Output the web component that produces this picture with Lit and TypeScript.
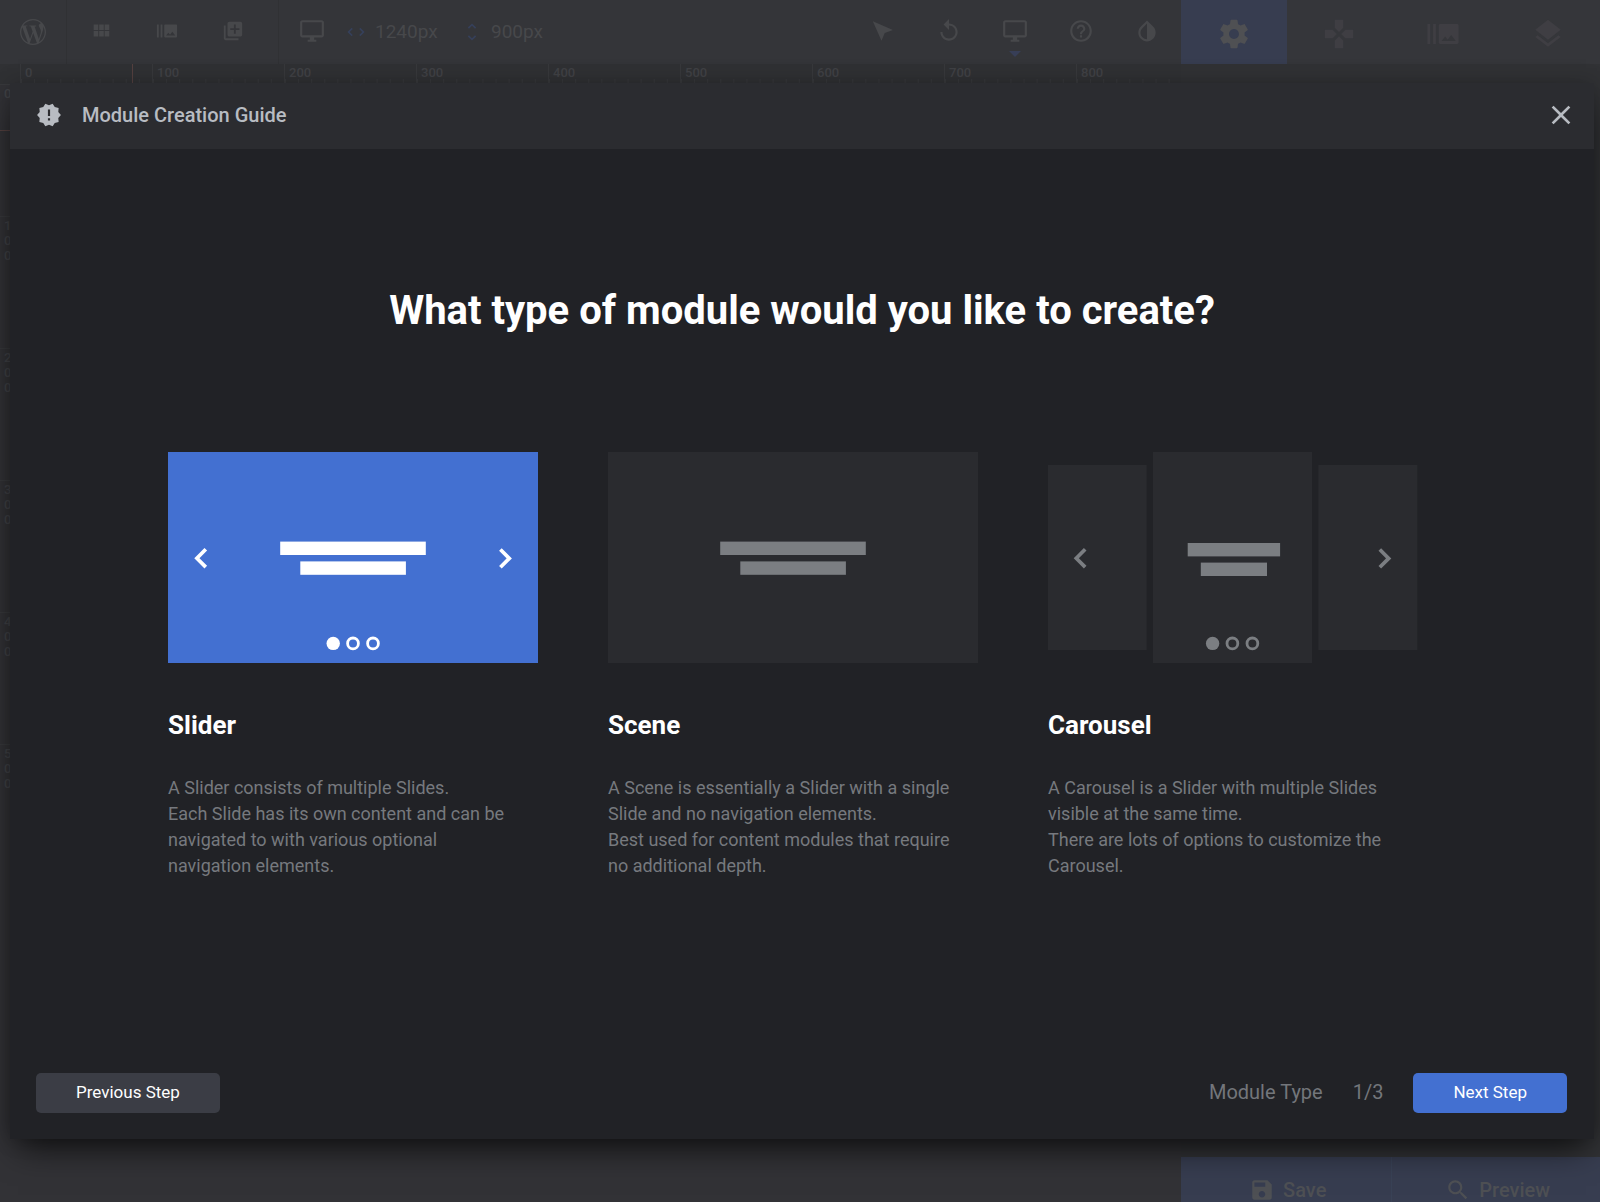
import { LitElement, html, css, svg } from "lit";
import { customElement, property, state } from "lit/decorators.js";
import { classMap } from "lit/directives/class-map.js";

const ICONS: Record<string, string> = {
  wordpress:
    "M21.469 6.825c.84 1.537 1.318 3.3 1.318 5.175 0 3.979-2.156 7.456-5.363 9.325l3.295-9.527c.615-1.54.82-2.771.82-3.864 0-.405-.026-.78-.07-1.11m-7.981.105c.647-.03 1.232-.105 1.232-.105.582-.075.514-.93-.067-.899 0 0-1.755.135-2.88.135-1.064 0-2.85-.15-2.85-.15-.585-.03-.661.855-.075.885 0 0 .54.061 1.125.09l1.68 4.605-2.37 7.08L5.354 6.9c.649-.03 1.234-.1 1.234-.1.585-.075.516-.93-.065-.896 0 0-1.746.138-2.874.138-.2 0-.438-.008-.69-.015C4.911 3.15 8.235 1.215 12 1.215c2.809 0 5.365 1.072 7.286 2.833-.046-.003-.091-.009-.141-.009-1.06 0-1.812.923-1.812 1.914 0 .89.513 1.643 1.06 2.531.411.72.89 1.643.89 2.977 0 .915-.354 1.994-.821 3.479l-1.075 3.585-3.9-11.61.001.014zM12 22.784c-1.059 0-2.081-.153-3.048-.437l3.237-9.406 3.315 9.087c.024.053.05.101.078.149-1.12.393-2.325.609-3.582.609M1.211 12c0-1.564.336-3.05.935-4.39L7.29 21.709C3.694 19.96 1.212 16.271 1.211 12M12 0C5.385 0 0 5.385 0 12s5.385 12 12 12 12-5.385 12-12S18.615 0 12 0",
  modules:
    "M4 11h5V5H4v6zm0 7h5v-6H4v6zm6 0h5v-6h-5v6zm6 0h5v-6h-5v6zm-6-7h5V5h-5v6zm6-6v6h5V5h-5z",
  slides:
    "M1 5h2v14H1zm4 0h2v14H5zm17 0H10c-.55 0-1 .45-1 1v12c0 .55.45 1 1 1h12c.55 0 1-.45 1-1V6c0-.55-.45-1-1-1zM11 17l2.5-3.15L15.29 16l2.5-3.22L21 17H11z",
  add: "M4 6H2v14c0 1.1.9 2 2 2h14v-2H4V6zm16-4H8c-1.1 0-2 .9-2 2v12c0 1.1.9 2 2 2h12c1.1 0 2-.9 2-2V4c0-1.1-.9-2-2-2zm-1 9h-4v4h-2v-4H9V9h4V5h2v4h4v2z",
  desktop:
    "M21 2H3c-1.1 0-2 .9-2 2v12c0 1.1.9 2 2 2h7v2H8v2h8v-2h-2v-2h7c1.1 0 2-.9 2-2V4c0-1.1-.9-2-2-2zm0 14H3V4h18v12z",
  width:
    "M7.2 16.6L2.6 12l4.6-4.6 1.3 1.3L5.2 12l3.3 3.3zM16.8 16.6l4.6-4.6-4.6-4.6-1.3 1.3 3.3 3.3-3.3 3.3z",
  height:
    "M7.4 7.2L12 2.6l4.6 4.6-1.3 1.3L12 5.2 8.7 8.5zM7.4 16.8l4.6 4.6 4.6-4.6-1.3-1.3-3.3 3.3-3.3-3.3z",
  pointer: "M2.6 3.1L21.2 11.1 13.6 13.9 10.6 21z",
  undo: "M12 5V1L7 6l5 5V7c3.31 0 6 2.69 6 6s-2.69 6-6 6-6-2.69-6-6H4c0 4.42 3.58 8 8 8s8-3.58 8-8-3.58-8-8-8z",
  help: "M11 18h2v-2h-2v2zm1-16C6.48 2 2 6.48 2 12s4.48 10 10 10 10-4.48 10-10S17.52 2 12 2zm0 18c-4.41 0-8-3.59-8-8s3.59-8 8-8 8 3.59 8 8-3.59 8-8 8zm0-14c-2.21 0-4 1.79-4 4h2c0-1.1.9-2 2-2s2 .9 2 2c0 2-3 1.75-3 5h2c0-2.25 3-2.5 3-5 0-2.21-1.79-4-4-4z",
  contrast:
    "M17.66 7.93L12 2.27 6.34 7.93c-3.12 3.12-3.12 8.19 0 11.31C7.9 20.8 9.95 21.58 12 21.58c2.05 0 4.1-.78 5.66-2.34 3.12-3.12 3.12-8.19 0-11.31zM12 19.59c-1.6 0-3.11-.62-4.24-1.76C6.62 16.69 6 15.19 6 13.59s.62-3.11 1.76-4.24L12 5.1v14.49z",
  settings:
    "M19.43 12.98c.04-.32.07-.64.07-.98s-.03-.66-.07-.98l2.11-1.65c.19-.15.24-.42.12-.64l-2-3.46c-.12-.22-.39-.3-.61-.22l-2.49 1c-.52-.4-1.08-.73-1.69-.98l-.38-2.65C14.46 2.18 14.25 2 14 2h-4c-.25 0-.46.18-.49.42l-.38 2.65c-.61.25-1.17.59-1.69.98l-2.49-1c-.23-.09-.49 0-.61.22l-2 3.46c-.13.22-.07.49.12.64l2.11 1.65c-.04.32-.07.65-.07.98s.03.66.07.98l-2.11 1.65c-.19.15-.24.42-.12.64l2 3.46c.12.22.39.3.61.22l2.49-1c.52.4 1.08.73 1.69.98l.38 2.65c.03.24.24.42.49.42h4c.25 0 .46-.18.49-.42l.38-2.65c.61-.25 1.17-.59 1.69-.98l2.49 1c.23.09.49 0 .61-.22l2-3.46c.12-.22.07-.49-.12-.64l-2.11-1.65zM12 15.5c-1.93 0-3.5-1.57-3.5-3.5s1.57-3.5 3.5-3.5 3.5 1.57 3.5 3.5-1.57 3.5-3.5 3.5z",
  navigation:
    "M15 7.5V2H9v5.5l3 3 3-3zM7.5 9H2v6h5.5l3-3-3-3zM9 16.5V22h6v-5.5l-3-3-3 3zM16.5 9l-3 3 3 3H22V9h-5.5z",
  layers:
    "M11.99 18.54l-7.37-5.73L3 14.07l9 7 9-7-1.63-1.27-7.38 5.74zM12 16l7.36-5.73L21 9l-9-7-9 7 1.63 1.27L12 16z",
  guide:
    "M23 12l-2.44-2.78.34-3.68-3.61-.82-1.89-3.18L12 3 8.6 1.54 6.71 4.72l-3.61.81.34 3.68L1 12l2.44 2.78-.34 3.69 3.61.82 1.89 3.18L12 21l3.4 1.46 1.89-3.18 3.61-.82-.34-3.68L23 12zm-10 5h-2v-2h2v2zm0-4h-2V7h2v6z",
  close:
    "M19 6.41L17.59 5 12 10.59 6.41 5 5 6.41 10.59 12 5 17.59 6.41 19 12 13.41 17.59 19 19 17.59 13.41 12z",
  save: "M17 3H5c-1.11 0-2 .9-2 2v14c0 1.1.89 2 2 2h14c1.1 0 2-.9 2-2V7l-4-4zm-5 16c-1.66 0-3-1.34-3-3s1.34-3 3-3 3 1.34 3 3-1.34 3-3 3zm3-10H5V5h10v4z",
  search:
    "M15.5 14h-.79l-.28-.27C15.41 12.59 16 11.11 16 9.5 16 5.91 13.09 3 9.5 3S3 5.91 3 9.5 5.91 16 9.5 16c1.61 0 3.09-.59 4.23-1.57l.27.28v.79l5 4.99L20.49 19l-4.99-5zm-6 0C7.01 14 5 11.99 5 9.5S7.01 5 9.5 5 14 7.01 14 9.5 11.99 14 9.5 14z",
};

const icon = (name: string, size: "small" | "medium" | "large" | "close" = "medium") => html`
  <svg class="icon ${size}" viewBox="0 0 24 24" aria-hidden="true"><path d=${ICONS[name]}></path></svg>
`;

const reset = css`
  * {
    box-sizing: border-box;
  }
  button {
    margin: 0;
    padding: 0;
    border: 0;
    background: none;
    color: inherit;
    font: inherit;
    cursor: pointer;
  }
  .icon {
    display: block;
    flex: none;
    width: 26px;
    height: 26px;
    fill: currentColor;
  }
  .icon.small {
    width: 22px;
    height: 22px;
  }
  .icon.large {
    width: 34px;
    height: 34px;
  }
  .icon.close {
    width: 32px;
    height: 32px;
  }
`;

/* ---------- Editor toolbar ---------- */

@customElement("editor-toolbar")
class EditorToolbar extends LitElement {
  static styles = [
    reset,
    css`
      :host {
        display: flex;
        height: 64px;
        background: #343539;
        color: #47484b;
      }
      .group {
        display: flex;
        align-items: stretch;
        padding: 0 12px 0 1px;
        border-right: 1px solid #303134;
      }
      .group.brand {
        padding: 0;
      }
      .tool {
        display: flex;
        align-items: center;
        justify-content: center;
        position: relative;
        width: 66px;
        height: 62px;
      }
      .brand .tool {
        height: 64px;
      }
      .tool.active::after {
        content: "";
        position: absolute;
        left: 27px;
        top: 51px;
        border: 6px solid transparent;
        border-top-color: #373e57;
        border-bottom: 0;
      }
      .size {
        display: flex;
        align-items: center;
        height: 64px;
      }
      .size .icon {
        color: #36405a;
      }
      .size input {
        width: 86px;
        margin-left: 8px;
        padding: 0;
        border: 0;
        background: none;
        color: inherit;
        font: 19px/24px Roboto, sans-serif;
      }
      .spacer {
        flex: 1;
      }
      .tabs {
        display: grid;
        grid-template-columns: 106px repeat(3, 1fr);
        flex: 0 0 419px;
        margin-left: 1px;
        background: #35363a;
        color: #3f3e43;
      }
      .tab {
        display: flex;
        align-items: center;
        justify-content: center;
        padding-top: 4px;
      }
      .tab.active {
        background: #373d50;
        color: #4f5053;
      }
    `,
  ];

  private tool(name: string, label: string, size: "small" | "medium", active = false) {
    return html`<button class=${classMap({ tool: true, active })} type="button" aria-label=${label}>
      ${icon(name, size)}
    </button>`;
  }

  render() {
    return html`
      <div class="group brand">${this.tool("wordpress", "WordPress", "medium")}</div>
      <div class="group">
        ${this.tool("modules", "Modules", "small")} ${this.tool("slides", "Slides", "small")}
        ${this.tool("add", "Add layer", "small")}
      </div>
      ${this.tool("desktop", "Desktop size", "medium")}
      <label class="size">${icon("width", "small")}<input type="text" aria-label="Width" value="1240px" /></label>
      <label class="size">${icon("height", "small")}<input type="text" aria-label="Height" value="900px" /></label>
      <div class="spacer"></div>
      ${this.tool("pointer", "Select", "medium")} ${this.tool("undo", "Undo", "medium")}
      ${this.tool("desktop", "Desktop view", "medium", true)} ${this.tool("help", "Help", "medium")}
      ${this.tool("contrast", "Colours", "medium")}
      <div class="tabs">
        ${[
          ["settings", "Module options"],
          ["navigation", "Navigation options"],
          ["slides", "Slide options"],
          ["layers", "Layer options"],
        ].map(
          ([name, label], i) => html`<button
            class=${classMap({ tab: true, active: i === 0 })}
            type="button"
            aria-label=${label}
          >
            ${icon(name, "large")}
          </button>`
        )}
      </div>
    `;
  }
}

/* ---------- Canvas with its two rulers ---------- */

@customElement("editor-canvas")
class EditorCanvas extends LitElement {
  static styles = [
    reset,
    css`
      :host {
        display: grid;
        grid-template-columns: 20px 1fr;
        grid-template-rows: 20px 1fr;
        position: relative;
        overflow: hidden;
        background: #323236;
        color: #414246;
        font: 500 13px/18px Roboto, sans-serif;
      }
      .corner,
      .top {
        background: #303134;
      }
      .top {
        display: flex;
        overflow: hidden;
      }
      .left {
        overflow: hidden;
      }
      .mark {
        flex: 0 0 132px;
        height: 19px;
        padding-left: 4px;
        border-left: 1px solid #38393c;
        background: linear-gradient(to right, #38393c 1px, transparent 1px) 0 15px / 10% 4px repeat-x;
      }
      .step {
        width: 20px;
        height: 132px;
        padding: 1px 0 0 4px;
        border-top: 1px solid #38393c;
      }
      .step span {
        display: block;
        line-height: 15px;
      }
      .guide {
        position: absolute;
        background: #554140;
      }
      .guide.vertical {
        left: 132px;
        top: 0;
        width: 1px;
        height: 20px;
      }
      .guide.horizontal {
        left: 0;
        top: 66px;
        width: 20px;
        height: 1px;
      }
    `,
  ];

  render() {
    const columns = [0, 100, 200, 300, 400, 500, 600, 700, 800];
    const rows = [0, 100, 200, 300, 400, 500];
    return html`
      <div class="corner"></div>
      <div class="top">${columns.map((n) => html`<div class="mark">${n}</div>`)}</div>
      <div class="left">
        ${rows.map((n) => html`<div class="step">${[...String(n)].map((d) => html`<span>${d}</span>`)}</div>`)}
      </div>
      <div class="guide vertical"></div>
      <div class="guide horizontal"></div>
    `;
  }
}

/* ---------- Module preview drawings ---------- */

type ModuleKind = "slider" | "scene" | "carousel";

@customElement("module-art")
class ModuleArt extends LitElement {
  @property() kind: ModuleKind = "slider";
  @property({ type: Boolean, reflect: true }) active = false;

  static styles = css`
    :host {
      display: block;
      --face: #2a2b2f;
      --ink: #7b7e82;
    }
    :host([active]) {
      --face: #4370d1;
      --ink: #ffffff;
    }
    .art {
      display: block;
      width: 100%;
    }
    .face {
      fill: var(--face);
    }
    .ink {
      fill: var(--ink);
    }
    .line {
      fill: none;
      stroke: var(--ink);
      stroke-width: 3.7;
    }
    .ring {
      fill: none;
      stroke: var(--ink);
      stroke-width: 2.8;
    }
  `;

  render() {
    const carousel = this.kind === "carousel";
    const faces = carousel
      ? svg`<rect class="face" x="0" y="13" width="98.6" height="185"></rect>
            <rect class="face" x="105" y="0" width="159" height="211"></rect>
            <rect class="face" x="270.4" y="13" width="99" height="185"></rect>`
      : svg`<rect class="face" width="370" height="211"></rect>`;
    const bars = carousel
      ? svg`<rect class="ink" x="139.7" y="91" width="92.4" height="13.4"></rect>
            <rect class="ink" x="152.8" y="110.6" width="66.2" height="13.4"></rect>`
      : svg`<rect class="ink" x="112.2" y="89.6" width="145.6" height="13.4"></rect>
            <rect class="ink" x="132.3" y="109.4" width="105.6" height="13.4"></rect>`;
    const controls =
      this.kind === "scene"
        ? null
        : svg`<g transform=${carousel ? "translate(-0.6 0)" : "translate(0 0)"}>
              <path class="line" d="M37.8 97.3L28.9 106.2 37.8 115.1"></path>
              <path class="line" d="M332.4 97.5L341.3 106.4 332.4 115.3"></path>
              <circle class="ink" cx="165.2" cy="191.4" r="6.7"></circle>
              <circle class="ring" cx="185" cy="191.4" r="5.4"></circle>
              <circle class="ring" cx="205" cy="191.4" r="5.4"></circle>
            </g>`;
    return html`<svg class="art" viewBox="0 0 370 211" aria-hidden="true">${faces}${bars}${controls}</svg>`;
  }
}

/* ---------- Guide dialog ---------- */

interface ModuleType {
  kind: ModuleKind;
  name: string;
  text: string[];
}

const MODULE_TYPES: ModuleType[] = [
  {
    kind: "slider",
    name: "Slider",
    text: [
      "A Slider consists of multiple Slides.",
      "Each Slide has its own content and can be navigated to with various optional navigation elements.",
    ],
  },
  {
    kind: "scene",
    name: "Scene",
    text: [
      "A Scene is essentially a Slider with a single Slide and no navigation elements.",
      "Best used for content modules that require no additional depth.",
    ],
  },
  {
    kind: "carousel",
    name: "Carousel",
    text: [
      "A Carousel is a Slider with multiple Slides visible at the same time.",
      "There are lots of options to customize the Carousel.",
    ],
  },
];

@customElement("creation-guide")
class CreationGuide extends LitElement {
  @state() private selected: ModuleKind = "slider";

  static styles = [
    reset,
    css`
      :host {
        display: flex;
        flex-direction: column;
        background: #212226;
        box-shadow: 0 16px 32px -8px rgba(0, 0, 0, 0.7), 0 0 20px rgba(0, 0, 0, 0.2);
      }
      .header {
        display: flex;
        align-items: center;
        height: 66px;
        padding: 0 17px 2px 26px;
        background: #2b2c30;
        color: #b8bcc2;
      }
      .title {
        flex: 1;
        margin: 0 0 0 20px;
        font-size: 20px;
        font-weight: 500;
        line-height: 24px;
      }
      .question {
        margin: 138px 0 0;
        color: #ffffff;
        font-size: 40px;
        font-weight: 700;
        line-height: 48px;
        text-align: center;
      }
      .types {
        display: grid;
        grid-template-columns: repeat(3, 1fr);
        gap: 70px;
        margin: 0;
        padding: 117px 176px 40px 158px;
        border: 0;
      }
      .type {
        display: block;
        cursor: pointer;
      }
      .type input {
        position: absolute;
        width: 1px;
        height: 1px;
        margin: 0;
        opacity: 0;
      }
      .name {
        display: block;
        margin-top: 46px;
        color: #ffffff;
        font-size: 26px;
        font-weight: 700;
        line-height: 32px;
      }
      .text {
        display: block;
        padding-right: 20px;
        color: #76797e;
        font-size: 18px;
        line-height: 26px;
      }
      .name + .text {
        margin-top: 34px;
      }
      .footer {
        display: flex;
        align-items: center;
        gap: 30px;
        margin-top: auto;
        padding: 0 27px 26px 26px;
        color: #73767b;
        font-size: 20px;
        line-height: 24px;
      }
      .step {
        flex: 1;
        text-align: right;
      }
      .action {
        height: 40px;
        padding: 0 40px 2px;
        border-radius: 5px;
        background: #3b3d45;
        color: #ffffff;
        font-size: 17px;
        font-weight: 400;
      }
      .action.next {
        background: #4370d1;
      }
      .status {
        display: flex;
        flex: 1;
        gap: 30px;
        padding-bottom: 2px;
      }
    `,
  ];

  render() {
    return html`
      <div class="header">
        ${icon("guide")}
        <h1 class="title">Module Creation Guide</h1>
        <button type="button" aria-label="Close">${icon("close", "close")}</button>
      </div>
      <h2 class="question" id="question">What type of module would you like to create?</h2>
      <fieldset class="types" aria-labelledby="question">
        ${MODULE_TYPES.map(
          (type) => html`<label class="type">
            <input
              type="radio"
              name="module-type"
              .value=${type.kind}
              .checked=${this.selected === type.kind}
              @change=${() => (this.selected = type.kind)}
            />
            <module-art .kind=${type.kind} ?active=${this.selected === type.kind}></module-art>
            <span class="name">${type.name}</span>
            ${type.text.map((line) => html`<span class="text">${line}</span>`)}
          </label>`
        )}
      </fieldset>
      <div class="footer">
        <button class="action" type="button">Previous Step</button>
        <div class="status"><span class="step">Module Type</span><span>1/3</span></div>
        <button class="action next" type="button">Next Step</button>
      </div>
    `;
  }
}

/* ---------- Page ---------- */

@customElement("app-root")
class AppRoot extends LitElement {
  static styles = [
    reset,
    css`
      :host {
        display: block;
        font-family: Roboto, sans-serif;
      }
      .page {
        display: grid;
        grid-template-rows: 64px 1fr;
        position: relative;
        min-height: 100vh;
        overflow: hidden;
        background: #323236;
      }
      .workspace {
        display: grid;
        grid-template-columns: 1fr 419px;
      }
      .panel {
        display: flex;
        flex-direction: column;
        justify-content: flex-end;
        background: #313235;
      }
      .actions {
        display: grid;
        grid-template-columns: 1fr 1fr;
      }
      .action {
        display: flex;
        justify-content: center;
        gap: 8px;
        height: 45px;
        padding: 20px 0 0 4px;
        overflow: hidden;
        background: #373d50;
        color: #4e5054;
        font-size: 20px;
        font-weight: 500;
        line-height: 26px;
      }
      .action + .action {
        border-left: 1px solid #394256;
      }
      .overlay {
        display: grid;
        position: absolute;
        inset: 0;
        padding: 83px 6px 63px 10px;
      }
    `,
  ];

  render() {
    return html`
      <div class="page">
        <editor-toolbar></editor-toolbar>
        <div class="workspace">
          <editor-canvas></editor-canvas>
          <div class="panel">
            <div class="actions">
              <button class="action" type="button">${icon("save")}Save</button>
              <button class="action" type="button">${icon("search")}Preview</button>
            </div>
          </div>
        </div>
        <div class="overlay">
          <creation-guide role="dialog" aria-label="Module Creation Guide"></creation-guide>
        </div>
      </div>
    `;
  }
}
